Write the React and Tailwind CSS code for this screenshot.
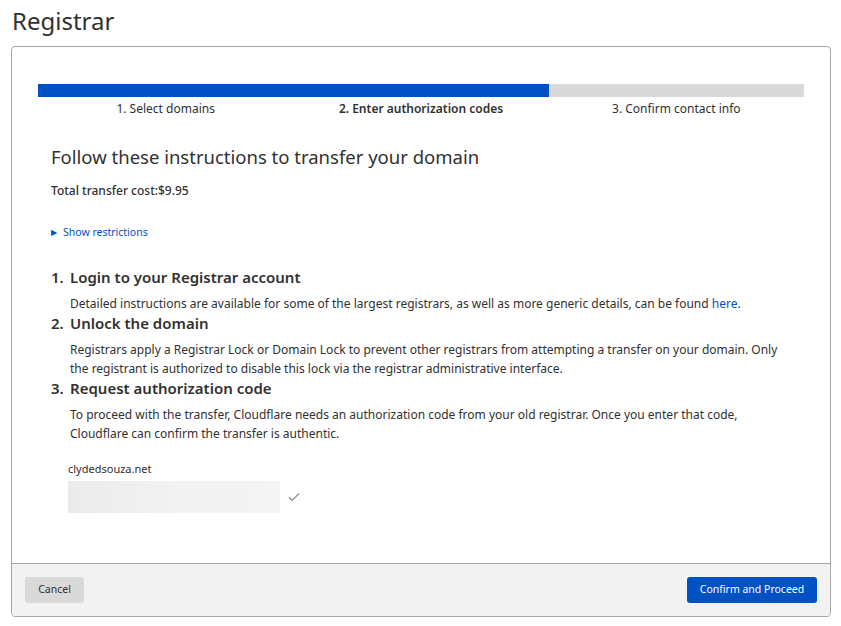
const steps = ['1. Select domains', '2. Enter authorization codes', '3. Confirm contact info'];

const Step = ({ n, title, children }) => (
  <li className="flex">
    <span className="w-[19px] shrink-0 text-[15px] leading-[20px] font-semibold">{n}.</span>
    <div>
      <h3 className="text-[15px] leading-[20px] font-semibold">{title}</h3>
      <p className="mt-[7px] text-[12px] leading-[19px]">{children}</p>
    </div>
  </li>
);

export default function App() {
  return (
    <div className="min-h-[626px] bg-white text-[#313131]" style={{ fontFamily: '"Noto Sans", "Open Sans", sans-serif' }}>
      <div className="px-[11px] pt-[3px]">
        <h1 className="text-[24px] leading-[36px] font-normal pl-[1px]">Registrar</h1>

        <div className="mt-[7px] w-[820px] border border-[#a6a6a6] rounded-[4px] overflow-hidden">
          <div className="px-[26px] pt-[37px] pb-[50px]">
            {/* Progress */}
            <div className="flex h-[13px]">
              <div className="w-[511px] bg-[#0051c3]" />
              <div className="flex-1 bg-[#d9d9d9]" />
            </div>
            <div className="grid grid-cols-3 text-[12px] leading-[20px] mt-[2px]">
              {steps.map((s, i) => (
                <div key={s} className={`text-center ${i === 1 ? 'font-semibold' : ''}`}>{s}</div>
              ))}
            </div>

            <div className="px-[13px]">
              <h2 className="mt-[25px] text-[18.5px] leading-[26px]">Follow these instructions to transfer your domain</h2>
              <p className="mt-[12px] text-[12px] leading-[18px] font-medium">Total transfer cost:$9.95</p>
              <div className="mt-[24px] flex items-center text-[10.5px] leading-[16px] text-[#0051c3]">
                <span className="text-[8px] mr-[6px]">▶</span>
                <span>Show restrictions</span>
              </div>

              <ol className="mt-[27px] flex flex-col">
                <Step n={1} title="Login to your Registrar account">
                  Detailed instructions are available for some of the largest registrars, as well as more generic details, can be found <span className="text-[#0051c3]">here</span>.
                </Step>
                <Step n={2} title="Unlock the domain">
                  Registrars apply a Registrar Lock or Domain Lock to prevent other registrars from attempting a transfer on your domain. Only the registrant is authorized to disable this lock via the registrar administrative interface.
                </Step>
                <Step n={3} title="Request authorization code">
                  To proceed with the transfer, Cloudflare needs an authorization code from your old registrar. Once you enter that code, Cloudflare can confirm the transfer is authentic.
                </Step>
              </ol>

              <div className="mt-[18px] pl-[17px]">
                <div className="text-[11px] leading-[16px]">clydedsouza.net</div>
                <div className="mt-[4px] flex items-center">
                  <div className="w-[212px] h-[32px] bg-gradient-to-r from-[#ebebeb] via-[#f2f2f2] to-[#f4f4f4]" />
                  <svg className="ml-[8px]" width="12" height="10" viewBox="0 0 12 10" fill="none" stroke="#8a8a8a" strokeWidth="1.2">
                    <path d="M1 5.5 L4.2 8.5 L11 1.5" />
                  </svg>
                </div>
              </div>
            </div>
          </div>

          {/* Footer */}
          <div className="border-t border-[#a6a6a6] bg-[#f2f2f2] flex justify-between items-center px-[13px] h-[53px]">
            <button className="h-[26px] w-[59px] rounded-[3px] bg-[#d9d9d9] text-[10.5px] text-[#313131]">Cancel</button>
            <button className="h-[26px] w-[130px] rounded-[3px] bg-[#0051c3] text-[10.5px] text-white">Confirm and Proceed</button>
          </div>
        </div>
      </div>
    </div>
  );
}
